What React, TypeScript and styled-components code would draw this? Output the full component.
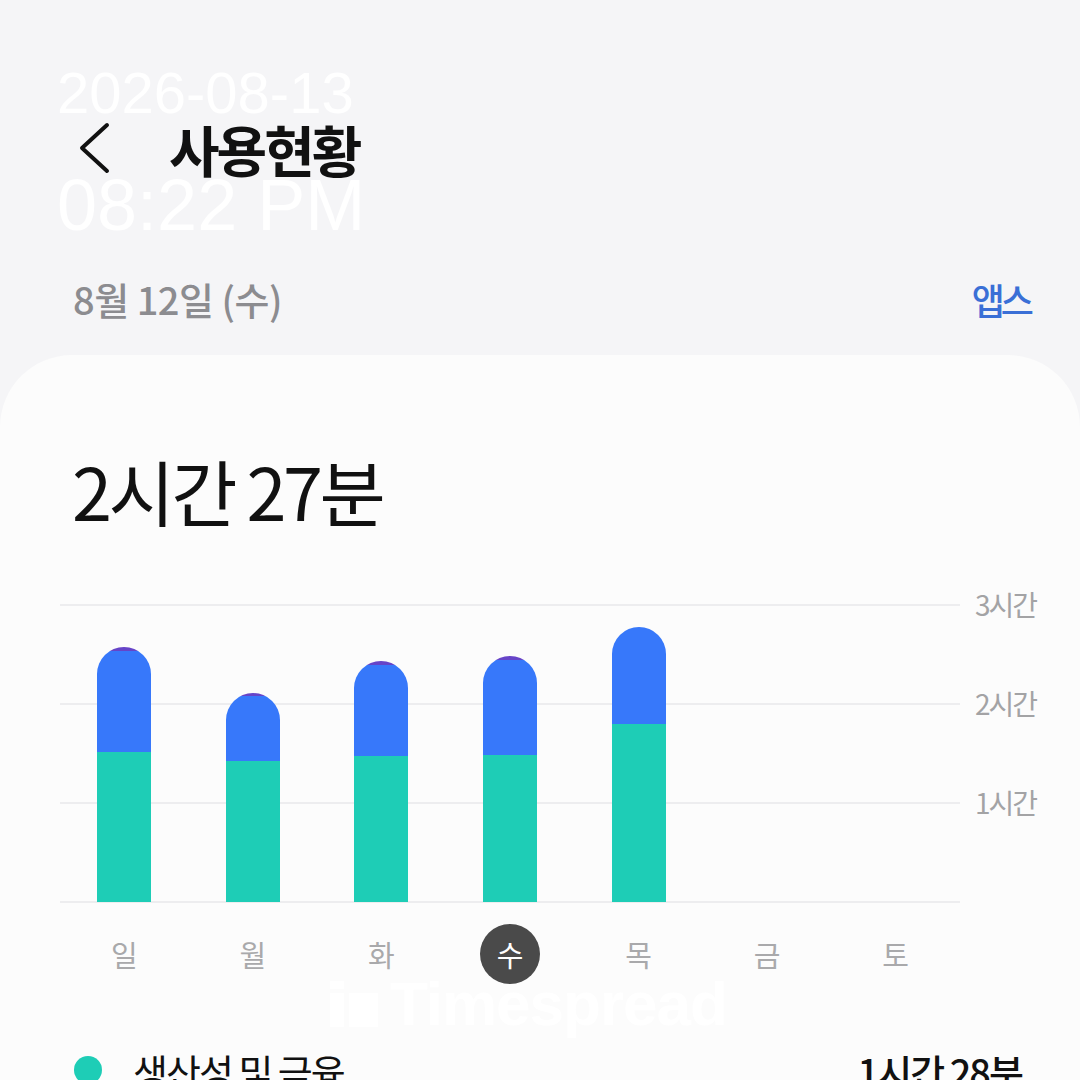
import React from "react";
import styled, { createGlobalStyle } from "styled-components";

const Global = createGlobalStyle`
  html, body { margin: 0; padding: 0; background: #f5f5f7; }
  body { font-family: "Noto Sans CJK KR", "Noto Sans", sans-serif; }
`;

const Screen = styled.div`
  position: relative;
  width: 1080px;
  height: 1080px;
  overflow: hidden;
  display: flex;
  flex-direction: column;
  background: #f5f5f7;
`;

const Stamp = styled.div`
  position: absolute;
  left: 57px;
  top: 64px;
  display: flex;
  flex-direction: column;
  color: rgba(255, 255, 255, 0.95);
  font-family: "Liberation Sans", Arial, sans-serif;
  line-height: 1;
  pointer-events: none;
  z-index: 2;
`;

const StampDate = styled.span`
  font-size: 58px;
  height: 58px;
`;

const StampTime = styled.span`
  margin-top: 47px;
  font-size: 72px;
`;

const TitleBar = styled.header`
  margin-top: 112px;
  height: 72px;
  display: flex;
  align-items: center;
  padding-left: 74px;
`;

const BackButton = styled.button`
  width: 40px;
  height: 60px;
  padding: 0;
  border: 0;
  background: none;
  display: flex;
  align-items: center;
  justify-content: center;
`;

const Title = styled.h1`
  margin: 0 0 0 55px;
  font-size: 55px;
  line-height: 72px;
  font-weight: 700;
  letter-spacing: -3px;
  color: #111;
`;

const DateRow = styled.div`
  margin-top: 87px;
  height: 60px;
  display: flex;
  align-items: center;
  justify-content: space-between;
  padding: 0 50px 0 73px;
`;

const DateText = styled.span`
  font-size: 38px;
  font-weight: 500;
  letter-spacing: -0.5px;
  color: #8c8c90;
`;

const AppsLink = styled.span`
  font-size: 36px;
  font-weight: 500;
  letter-spacing: -4px;
  color: #3a6fd6;
`;

const Card = styled.section`
  margin-top: 29px;
  flex: 1;
  background: #fcfcfc;
  border-radius: 72px 72px 0 0;
  display: flex;
  flex-direction: column;
`;

const Total = styled.div`
  padding: 93px 0 0 72px;
  font-size: 72px;
  line-height: 84px;
  letter-spacing: -3.5px;
  color: #111;
`;

const Chart = styled.div`
  margin-top: 72px;
  padding-left: 60px;
  display: grid;
  grid-template-columns: 900px auto;
  column-gap: 15px;
  align-items: start;
`;

const Plot = styled.div`
  height: 300px;
  box-sizing: border-box;
  padding-bottom: 2px;
  display: grid;
  grid-template-columns: repeat(7, 1fr);
  align-items: end;
  background: repeating-linear-gradient(
    to bottom,
    #ededef 0,
    #ededef 2px,
    transparent 2px,
    transparent 99px
  );
`;

const Bar = styled.div`
  width: 54px;
  justify-self: center;
  display: flex;
  flex-direction: column;
  border-radius: 27px 27px 0 0;
  overflow: hidden;
`;

const Segment = styled.div<{ $color: string }>`
  flex: none;
  background: ${(p) => p.$color};
`;

const Axis = styled.div`
  margin-top: -20px;
  display: flex;
  flex-direction: column;
`;

const AxisLabel = styled.span`
  height: 99px;
  font-size: 28px;
  line-height: 40px;
  letter-spacing: -2px;
  color: #a3a3a5;
`;

const Days = styled.div`
  margin: 20px 0 0 60px;
  width: 900px;
  display: grid;
  grid-template-columns: repeat(7, 1fr);
  justify-items: center;
`;

const Day = styled.span<{ $active?: boolean }>`
  width: 60px;
  height: 60px;
  border-radius: 50%;
  display: flex;
  align-items: center;
  justify-content: center;
  font-size: 29px;
  color: ${(p) => (p.$active ? "#ffffff" : "#a9a9ab")};
  background: ${(p) => (p.$active ? "#4a4a4a" : "transparent")};
`;

const Watermark = styled.div`
  position: absolute;
  left: 330px;
  top: 968px;
  display: flex;
  align-items: center;
  gap: 12px;
  color: rgba(255, 255, 255, 0.95);
  font-family: "Liberation Sans", Arial, sans-serif;
  font-weight: 700;
  font-size: 62px;
  letter-spacing: -1px;
  pointer-events: none;
`;

const Legend = styled.div`
  margin-top: 56px;
  height: 60px;
  display: flex;
  align-items: center;
  padding: 0 58px 0 74px;
`;

const Dot = styled.span`
  width: 28px;
  height: 28px;
  border-radius: 50%;
  background: #1ecdb6;
  flex: none;
`;

const LegendName = styled.span`
  flex: 1;
  margin-left: 31px;
  font-size: 38px;
  letter-spacing: -2px;
  color: #111;
`;

const LegendValue = styled.span`
  font-size: 38px;
  font-weight: 500;
  letter-spacing: -2px;
  color: #111;
`;

const TEAL = "#1ecdb6";
const BLUE = "#3778fa";
const PURPLE = "#6644c8";

type BarData = { purple: number; blue: number; teal: number };

const bars: (BarData | null)[] = [
  { purple: 4, blue: 101, teal: 150 },
  { purple: 3, blue: 65, teal: 141 },
  { purple: 4, blue: 91, teal: 146 },
  { purple: 4, blue: 95, teal: 147 },
  { purple: 0, blue: 97, teal: 178 },
  null,
  null,
];

const days = ["일", "월", "화", "수", "목", "금", "토"];

export default function App() {
  return (
    <Screen>
      <Global />
      <Stamp>
        <StampDate>2026-08-13</StampDate>
        <StampTime>08:22 PM</StampTime>
      </Stamp>

      <TitleBar>
        <BackButton aria-label="뒤로">
          <svg width="34" height="54" viewBox="0 0 34 54">
            <polyline
              points="30,4 5,27 30,50"
              fill="none"
              stroke="#111"
              strokeWidth="4"
              strokeLinecap="round"
              strokeLinejoin="round"
            />
          </svg>
        </BackButton>
        <Title>사용현황</Title>
      </TitleBar>

      <DateRow>
        <DateText>8월 12일 (수)</DateText>
        <AppsLink>앱스</AppsLink>
      </DateRow>

      <Card>
        <Total>2시간 27분</Total>

        <Chart>
          <Plot>
            {bars.map((b, i) =>
              b ? (
                <Bar key={i}>
                  <Segment $color={PURPLE} style={{ height: b.purple }} />
                  <Segment $color={BLUE} style={{ height: b.blue }} />
                  <Segment $color={TEAL} style={{ height: b.teal }} />
                </Bar>
              ) : (
                <span key={i} />
              )
            )}
          </Plot>
          <Axis>
            <AxisLabel>3시간</AxisLabel>
            <AxisLabel>2시간</AxisLabel>
            <AxisLabel>1시간</AxisLabel>
          </Axis>
        </Chart>

        <Days>
          {days.map((d) => (
            <Day key={d} $active={d === "수"}>
              {d}
            </Day>
          ))}
        </Days>

        <Legend>
          <Dot />
          <LegendName>생산성 및 금융</LegendName>
          <LegendValue>1시간 28분</LegendValue>
        </Legend>
      </Card>

      <Watermark>
        <svg width="48" height="46" viewBox="0 0 48 46">
          <rect x="0" y="0" width="14" height="8" fill="currentColor" />
          <rect x="0" y="12" width="14" height="34" fill="currentColor" />
          <rect x="19" y="12" width="29" height="34" fill="currentColor" />
        </svg>
        <span>Timespread</span>
      </Watermark>
    </Screen>
  );
}
